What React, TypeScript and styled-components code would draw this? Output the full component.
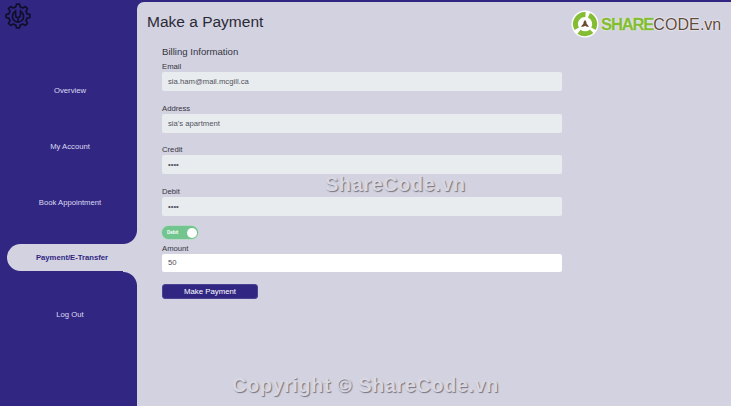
import React from 'react';
import styled, { createGlobalStyle } from 'styled-components';

const PURPLE = '#312783';
const LAVENDER = '#d3d2e1';

const GlobalStyle = createGlobalStyle`
  html, body {
    margin: 0;
    padding: 0;
    background: ${PURPLE};
    font-family: "Liberation Sans", Arial, sans-serif;
  }
`;

const Page = styled.div`
  position: relative;
  display: flex;
  width: 731px;
  height: 406px;
  overflow: hidden;
  background: ${PURPLE};
`;

const Sidebar = styled.aside`
  display: flex;
  flex-direction: column;
  width: 137px;
  flex-shrink: 0;
`;

const GearSlot = styled.div`
  height: 62px;
  padding: 3px 0 0 5px;
  box-sizing: border-box;
`;

const Nav = styled.nav`
  display: flex;
  flex-direction: column;
`;

const NavSlot = styled.div<{ $active?: boolean }>`
  position: relative;
  display: flex;
  align-items: center;
  justify-content: center;
  height: 56px;
  padding-left: 3px;
  box-sizing: border-box;
  font-size: 7.7px;
  color: #dcdaf0;

  ${props => props.$active && `
    padding: 14px 0 15px 7px;
    align-items: stretch;

    &::before, &::after {
      content: '';
      position: absolute;
      right: 0;
      width: 14px;
    }
    &::before {
      top: 0;
      height: 14px;
      background: radial-gradient(circle at 0 0, ${PURPLE} 13.5px, ${LAVENDER} 14.5px);
    }
    &::after {
      bottom: 0;
      height: 15px;
      background: radial-gradient(circle at 0 100%, ${PURPLE} 13.5px, ${LAVENDER} 14.5px);
    }
  `}
`;

const ActivePill = styled.div`
  flex: 1;
  display: flex;
  align-items: center;
  justify-content: center;
  background: ${LAVENDER};
  border-radius: 14px 0 0 14px;
  color: ${PURPLE};
  font-weight: 700;
`;

const Main = styled.main`
  flex: 1;
  margin-top: 2px;
  padding: 10px 0 0 10px;
  background: ${LAVENDER};
  border-top-left-radius: 7px;
`;

const Title = styled.h1`
  margin: 0;
  font-size: 15.5px;
  line-height: 19px;
  font-weight: 400;
  color: #2a2a36;
`;

const Form = styled.form`
  display: flex;
  flex-direction: column;
  width: 400px;
  margin: 15px 0 0 15px;
`;

const Heading = styled.h2`
  margin: 0 0 4px;
  font-size: 9.6px;
  line-height: 12px;
  font-weight: 400;
  color: #363642;
`;

const Field = styled.label<{ $gap?: number }>`
  display: flex;
  flex-direction: column;
  margin-bottom: ${props => props.$gap ?? 12.5}px;
  font-size: 7.7px;
  line-height: 10px;
  color: #363642;
`;

const Input = styled.input<{ $editable?: boolean }>`
  width: 100%;
  height: ${props => (props.$editable ? 18.5 : 19)}px;
  padding: 0 6px;
  box-sizing: border-box;
  border: 0;
  border-radius: 2px;
  outline: none;
  background: ${props => (props.$editable ? '#ffffff' : '#e9ecef')};
  color: #50525c;
  font-family: inherit;
  font-size: 7.7px;
`;

const Toggle = styled.div`
  display: flex;
  align-items: center;
  justify-content: space-between;
  width: 36px;
  height: 13px;
  margin: 0 0 4.5px;
  padding: 0 1px 0 5px;
  box-sizing: border-box;
  border-radius: 7px;
  background: #72c58f;
  box-shadow: 0 0 0 0.5px #a5d9b6;
  color: #ffffff;
  font-size: 4.5px;
  font-weight: 700;
`;

const Knob = styled.span`
  width: 10px;
  height: 10px;
  border-radius: 50%;
  background: #ffffff;
`;

const PayButton = styled.button`
  width: 96px;
  height: 15px;
  padding: 0;
  box-sizing: border-box;
  border: 1px solid #4a4392;
  border-radius: 3px;
  background: ${PURPLE};
  color: #ffffff;
  font-family: inherit;
  font-size: 7.8px;
`;

const Logo = styled.div`
  position: absolute;
  top: 10px;
  left: 571px;
  display: flex;
  align-items: center;
  gap: 2px;
  font-size: 16px;
  text-shadow: 0 0 2px #ffffff, 0 0 1px #ffffff;
`;

const LogoGreen = styled.span`
  color: #84bd34;
  font-size: 16.5px;
  font-weight: 700;
  letter-spacing: -1.1px;
  -webkit-text-stroke: 0.3px #84bd34;
`;

const LogoBrown = styled.span`
  color: #5f4a3a;
  letter-spacing: 0.1px;
`;

const LogoSmall = styled.span`
  color: #5f4a3a;
`;

const Watermark = styled.div<{ $top: number; $left: number }>`
  position: absolute;
  top: ${props => props.$top}px;
  left: ${props => props.$left}px;
  font-size: 20px;
  font-weight: 700;
  letter-spacing: 0.5px;
  color: #d9d8e2;
  text-shadow: 1px 1px 1px #77767f;
  white-space: nowrap;
`;

// gear outline with the wrench-like U in the middle
const gearPath = () => {
  const pts: string[] = [];
  const teeth = 8;
  for (let i = 0; i < teeth; i++) {
    const a = (i / teeth) * Math.PI * 2 - Math.PI / 2;
    const step = (Math.PI * 2) / teeth;
    const corners: [number, number][] = [
      [9.4, a - step * 0.3],
      [12, a - step * 0.16],
      [12, a + step * 0.16],
      [9.4, a + step * 0.3],
    ];
    corners.forEach(([r, t]) => {
      pts.push(`${(13 + r * Math.cos(t)).toFixed(2)} ${(13 + r * Math.sin(t)).toFixed(2)}`);
    });
  }
  return 'M' + pts.join('L') + 'Z';
};

const GearIcon = () => (
  <svg width="26" height="26" viewBox="0 0 26 26" fill="none" stroke="#0f0f2a" strokeWidth="1.7" strokeLinejoin="round" strokeLinecap="round">
    <path d={gearPath()} />
    <path d="M9.6 9a5.6 5.6 0 1 0 6.8 0" />
    <path d="M10.6 7.4v4.8a2.4 2.4 0 0 0 4.8 0V7.4" />
    <path d="M13 16v2.4" />
  </svg>
);

const LogoMark = () => (
  <svg width="28" height="28" viewBox="0 0 28 28" fill="none">
    <circle cx="14" cy="14" r="13.5" fill="#ffffff" />
    <g stroke="#84bd34" strokeWidth="5">
      <path d="M5.8 18.8A9.6 9.6 0 0 1 14.5 4.400" />
      <path d="M18 5.300A9.600 9.600 0 0 1 22.400 18.800" />
      <path d="M20.600 21.200A9.600 9.600 0 0 1 8 21.800" />
    </g>
    <path d="M14 10c1.300 1.400 1.700 2.700 1.600 3.700l2.400 2.800c-1.400.4-2.700.2-3.900-.8-1.200 1-2.600 1.200-4.100.8l2.400-2.800C12.300 12.700 12.800 11.400 14 10z" fill="#6a4a30" />
  </svg>
);

const links = ['Overview', 'My Account', 'Book Appointment', 'Payment/E-Transfer', 'Log Out'];
const ACTIVE = 'Payment/E-Transfer';

const App: React.FC = () => (
  <Page>
    <GlobalStyle />
    <Sidebar>
      <GearSlot>
        <GearIcon />
      </GearSlot>
      <Nav>
        {links.map(link =>
          link === ACTIVE ? (
            <NavSlot key={link} $active>
              <ActivePill>{link}</ActivePill>
            </NavSlot>
          ) : (
            <NavSlot key={link}>{link}</NavSlot>
          )
        )}
      </Nav>
    </Sidebar>
    <Main>
      <Title>Make a Payment</Title>
      <Form>
        <Heading>Billing Information</Heading>
        <Field>
          Email
          <Input readOnly value="sia.ham@mail.mcgill.ca" />
        </Field>
        <Field>
          Address
          <Input readOnly value="sia's apartment" />
        </Field>
        <Field>
          Credit
          <Input readOnly type="password" value="1234" />
        </Field>
        <Field $gap={10.5}>
          Debit
          <Input readOnly type="password" value="1234" />
        </Field>
        <Toggle>
          Debit
          <Knob />
        </Toggle>
        <Field $gap={12}>
          Amount
          <Input $editable readOnly value="50" />
        </Field>
        <PayButton type="button">Make Payment</PayButton>
      </Form>
    </Main>
    <Logo>
      <LogoMark />
      <span>
        <LogoGreen>SHARE</LogoGreen>
        <LogoBrown>CODE</LogoBrown>
        <LogoSmall>.vn</LogoSmall>
      </span>
    </Logo>
    <Watermark $top={173} $left={325}>ShareCode.vn</Watermark>
    <Watermark $top={374} $left={232}>Copyright © ShareCode.vn</Watermark>
  </Page>
);

export default App;
